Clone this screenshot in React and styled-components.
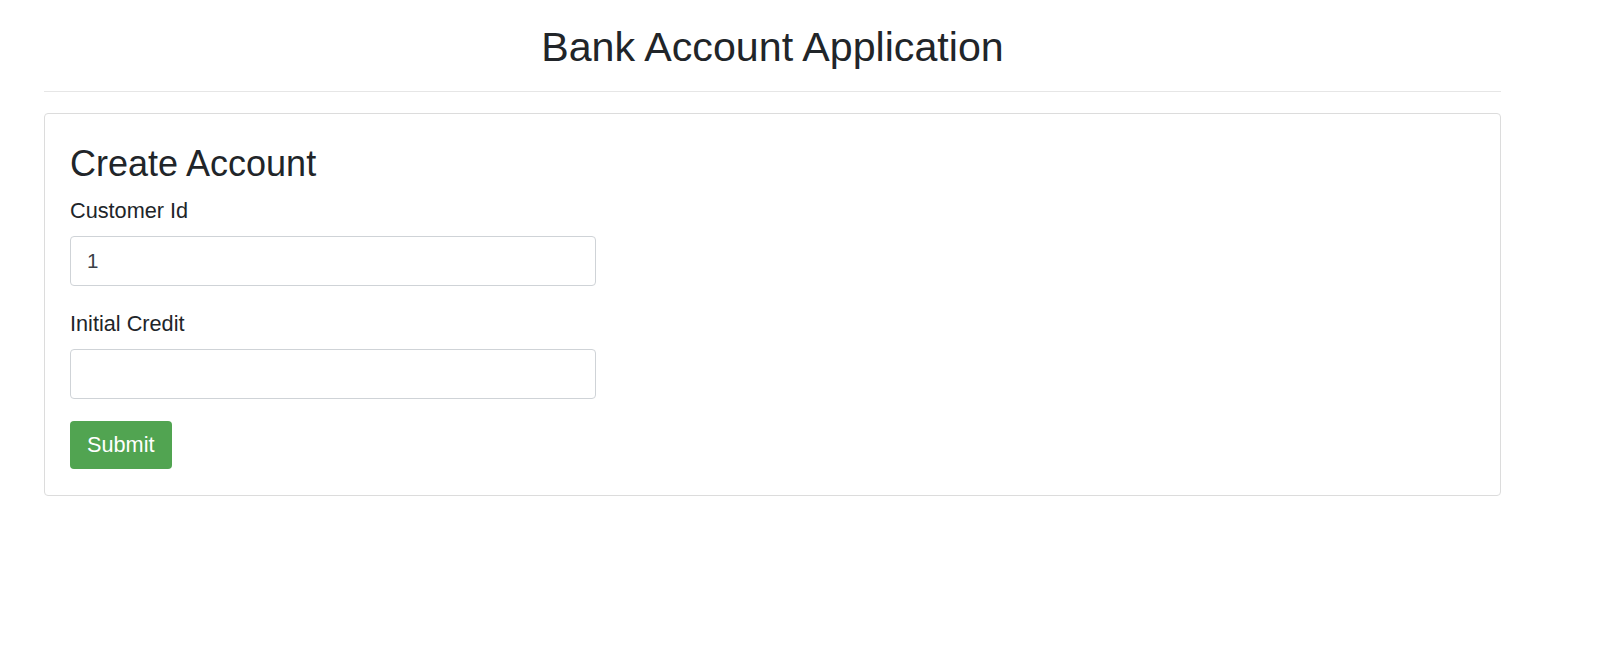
import React, { useState } from 'react'
import styled, { createGlobalStyle } from 'styled-components'

const GlobalStyle = createGlobalStyle`
* {
    box-sizing: border-box;
}

body {
    margin: 0;
    background: #fff;
    color: #212529;
    font-family: "Liberation Sans", Arial, Helvetica, sans-serif;
}
`

function App() {

    const [customerId, setCustomerId] = useState('1')
    const [initialCredit, setInitialCredit] = useState('')

    const submit = (e) => {
        e.preventDefault()
    }

    return (
        <Page>
            <GlobalStyle />

            <Header>
                <Title>Bank Account Application</Title>
            </Header>

            <Card>
                <CardTitle>Create Account</CardTitle>

                <Form onSubmit={submit}>
                    <FormGroup>
                        <Label htmlFor='customerId'>Customer Id</Label>
                        <Input id='customerId' type='text'
                            value={customerId}
                            onChange={(e) => setCustomerId(e.target.value)} />
                    </FormGroup>

                    <FormGroup>
                        <Label htmlFor='initialCredit'>Initial Credit</Label>
                        <Input id='initialCredit' type='text'
                            value={initialCredit}
                            onChange={(e) => setInitialCredit(e.target.value)} />
                    </FormGroup>

                    <SubmitBtn type='submit'>Submit</SubmitBtn>
                </Form>
            </Card>
        </Page>
    )
}

const Page = styled.div`
width: 1457px;
margin-left: 44px;
`

const Header = styled.header`
padding: 23px 0 20px;
border-bottom: 1px solid #e6e6e6;
`

const Title = styled.h1`
margin: 0;
text-align: center;
font-size: 41.2px;
line-height: 48px;
font-weight: 400;
`

const Card = styled.section`
margin-top: 21px;
padding: 29px 25px 26px;
border: 1px solid #dcdcdc;
border-radius: 4px;
`

const CardTitle = styled.h2`
margin: 0 0 10px;
font-size: 36px;
line-height: 42px;
font-weight: 400;
`

const Form = styled.form`
width: 526px;
`

const FormGroup = styled.div`
margin-bottom: 22px;
`

const Label = styled.label`
display: block;
margin-bottom: 10px;
font-size: 21.7px;
line-height: 31px;
`

const Input = styled.input`
display: block;
width: 100%;
height: 50px;
padding: 0 16px;
border: 1px solid #cfd3d7;
border-radius: 4px;
outline: none;
background: #fff;
color: #3b4046;
font-family: inherit;
font-size: 20.5px;
`

const SubmitBtn = styled.button`
height: 48px;
padding: 0 17px;
border: 0;
border-radius: 4px;
background: #51a451;
color: #fff;
font-family: inherit;
font-size: 21.7px;
cursor: pointer;
`

export default App
